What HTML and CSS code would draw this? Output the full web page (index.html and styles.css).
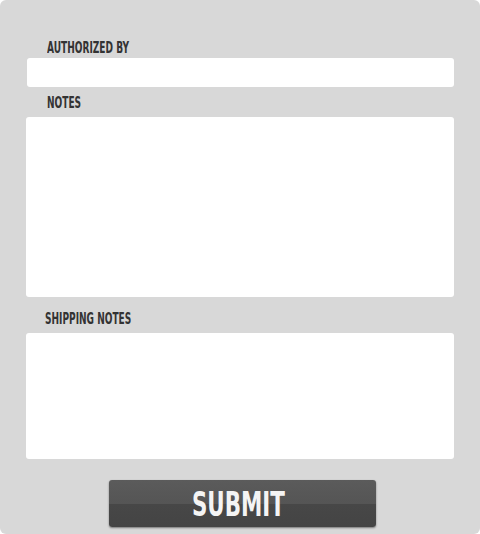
FILE: index.html
```html
<!DOCTYPE html>
<html>
<head>
<meta charset="utf-8">
<link rel="stylesheet" href="styles.css">
</head>
<body>
<form class="panel">
  <label class="label label-auth"><span class="label-text">AUTHORIZED BY</span></label>
  <input class="field field-input" type="text">
  <label class="label label-notes"><span class="label-text">NOTES</span></label>
  <textarea class="field field-notes"></textarea>
  <label class="label label-ship"><span class="label-text">SHIPPING NOTES</span></label>
  <textarea class="field field-ship"></textarea>
  <div class="actions">
    <button class="submit" type="button"><span class="submit-text">SUBMIT</span></button>
  </div>
</form>
</body>
</html>
```
FILE: styles.css
```css
html, body {
  margin: 0;
  padding: 0;
  background: #ffffff;
}
.panel {
  box-sizing: border-box;
  width: 480px;
  height: 534px;
  margin: 0;
  background: #d8d8d8;
  border-radius: 6px;
  padding: 39px 25px 0 26px;
  display: flex;
  flex-direction: column;
}
.label {
  display: block;
  font-family: "DejaVu Sans", sans-serif;
  font-stretch: condensed;
  font-weight: bold;
  font-size: 15px;
  line-height: 18px;
  color: #333333;
  padding-left: 21px;
  white-space: nowrap;
}
.label-text {
  display: inline-block;
  transform: scaleX(0.67);
  transform-origin: left center;
}
.field {
  display: block;
  box-sizing: border-box;
  border: none;
  outline: none;
  background: #ffffff;
  border-radius: 3px;
  padding: 0;
  margin: 0;
  resize: none;
  width: 428px;
}
.field-input {
  height: 29px;
  margin-left: 1px;
  width: 427px;
  margin-top: 1px;
}
.label-notes {
  margin-top: 7px;
}
.field-notes {
  height: 180px;
  margin-top: 5px;
}
.label-ship {
  margin-top: 13px;
  padding-left: 19px;
}
.field-ship {
  height: 126px;
  margin-top: 5px;
}
.actions {
  display: flex;
  justify-content: center;
  margin-top: 21px;
  padding-left: 4px;
}
.submit {
  width: 267px;
  height: 47px;
  border: none;
  border-radius: 3px;
  background: linear-gradient(#5b5b5b 0%, #555555 50%, #474747 52%, #444444 100%);
  box-shadow: 0 1px 2px rgba(0,0,0,0.45);
  color: #f4f4f4;
  font-family: "DejaVu Sans", sans-serif;
  font-stretch: condensed;
  font-weight: bold;
  font-size: 34px;
  line-height: 49px;
  padding: 0 8px 0 0;
  overflow: hidden;
}
.submit-text {
  display: inline-block;
  transform: scaleX(0.7);
  transform-origin: center center;
}
```
